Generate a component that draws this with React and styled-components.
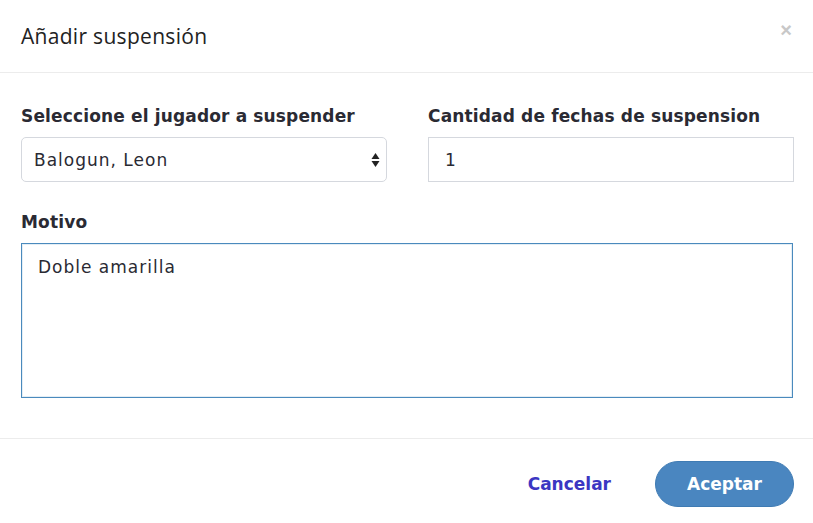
import styled, { createGlobalStyle } from 'styled-components';

const GlobalStyle = createGlobalStyle`
  body {
    margin: 0;
    background: #fff;
    font-family: 'DejaVu Sans', sans-serif;
  }
`;

const Modal = styled.div`
  width: 813px;
  height: 523px;
  background: #fff;
  display: flex;
  flex-direction: column;
`;

const Header = styled.div`
  height: 73px;
  box-sizing: border-box;
  border-bottom: 1px solid #ececec;
  display: flex;
  align-items: center;
  justify-content: space-between;
  padding: 0 21px 0 21px;
`;

const Title = styled.h4`
  margin: 0;
  font-family: 'Open Sans', sans-serif;
  font-weight: 400;
  font-size: 21px;
  color: #222;
  letter-spacing: 0.3px;
`;

const Close = styled.button`
  border: none;
  background: none;
  padding: 0;
  margin-top: -12px;
  margin-right: 0;
  font-family: 'Liberation Sans', sans-serif;
  font-size: 20px;
  font-weight: 700;
  color: #c8c8c8;
  cursor: pointer;
`;

const Body = styled.div`
  padding: 33px 20px 0 21px;
  display: flex;
  flex-direction: column;
  gap: 30px;
  height: 366px;
  box-sizing: border-box;
  border-bottom: 1px solid #ececec;
`;

const Row = styled.div`
  display: grid;
  grid-template-columns: 366px 366px;
  column-gap: 41px;
`;

const Field = styled.div`
  display: flex;
  flex-direction: column;
`;

const Label = styled.label`
  font-size: 17px;
  font-weight: 700;
  color: #2a2a33;
  margin-bottom: 11px;
  letter-spacing: 0.15px;
`;

const SelectBox = styled.div`
  height: 45px;
  box-sizing: border-box;
  border: 1px solid #d5d8de;
  border-radius: 5px;
  display: flex;
  align-items: center;
  justify-content: space-between;
  padding: 0 6px 0 12px;
  font-size: 17px;
  letter-spacing: 1px;
  color: #2a2a33;
`;

const Arrows = styled.svg`
  width: 9px;
  height: 16px;
`;

const Input = styled.div`
  height: 45px;
  box-sizing: border-box;
  border: 1px solid #d5d8de;
  display: flex;
  align-items: center;
  padding: 0 16px;
  font-size: 17px;
  color: #2a2a33;
`;

const TextArea = styled.div`
  height: 155px;
  box-sizing: border-box;
  border: 1px solid #4a8abd;
  box-shadow: inset 0 0 0 1px rgba(74, 138, 189, 0.15);
  padding: 13px 16px;
  font-size: 17px;
  letter-spacing: 1px;
  color: #2a2a33;
`;

const Footer = styled.div`
  flex: 1;
  display: flex;
  align-items: center;
  justify-content: flex-end;
  gap: 44px;
  padding: 6px 19px 0 0;
`;

const TextButton = styled.button`
  border: none;
  background: none;
  font-family: 'DejaVu Sans', sans-serif;
  font-weight: 700;
  font-size: 17px;
  color: #3b36c2;
  padding: 0;
`;

const PrimaryButton = styled.button`
  width: 139px;
  height: 46px;
  border: 1px solid #3f7bb3;
  border-radius: 23px;
  background: #4a86c0;
  color: #fff;
  font-family: 'DejaVu Sans', sans-serif;
  font-weight: 700;
  font-size: 17px;
`;

export default function App() {
  return (
    <>
      <GlobalStyle />
      <Modal>
        <Header>
          <Title>Añadir suspensión</Title>
          <Close aria-label="Cerrar">×</Close>
        </Header>
        <Body>
          <Row>
            <Field>
              <Label>Seleccione el jugador a suspender</Label>
              <SelectBox>
                <span>Balogun, Leon</span>
                <Arrows viewBox="0 0 9 16">
                  <path d="M4.5 1 L8.5 7 H0.5 Z" fill="#222" />
                  <path d="M4.5 15 L8.5 9 H0.5 Z" fill="#222" />
                </Arrows>
              </SelectBox>
            </Field>
            <Field>
              <Label>Cantidad de fechas de suspension</Label>
              <Input>1</Input>
            </Field>
          </Row>
          <Field>
            <Label>Motivo</Label>
            <TextArea>Doble amarilla</TextArea>
          </Field>
        </Body>
        <Footer>
          <TextButton>Cancelar</TextButton>
          <PrimaryButton>Aceptar</PrimaryButton>
        </Footer>
      </Modal>
    </>
  );
}
